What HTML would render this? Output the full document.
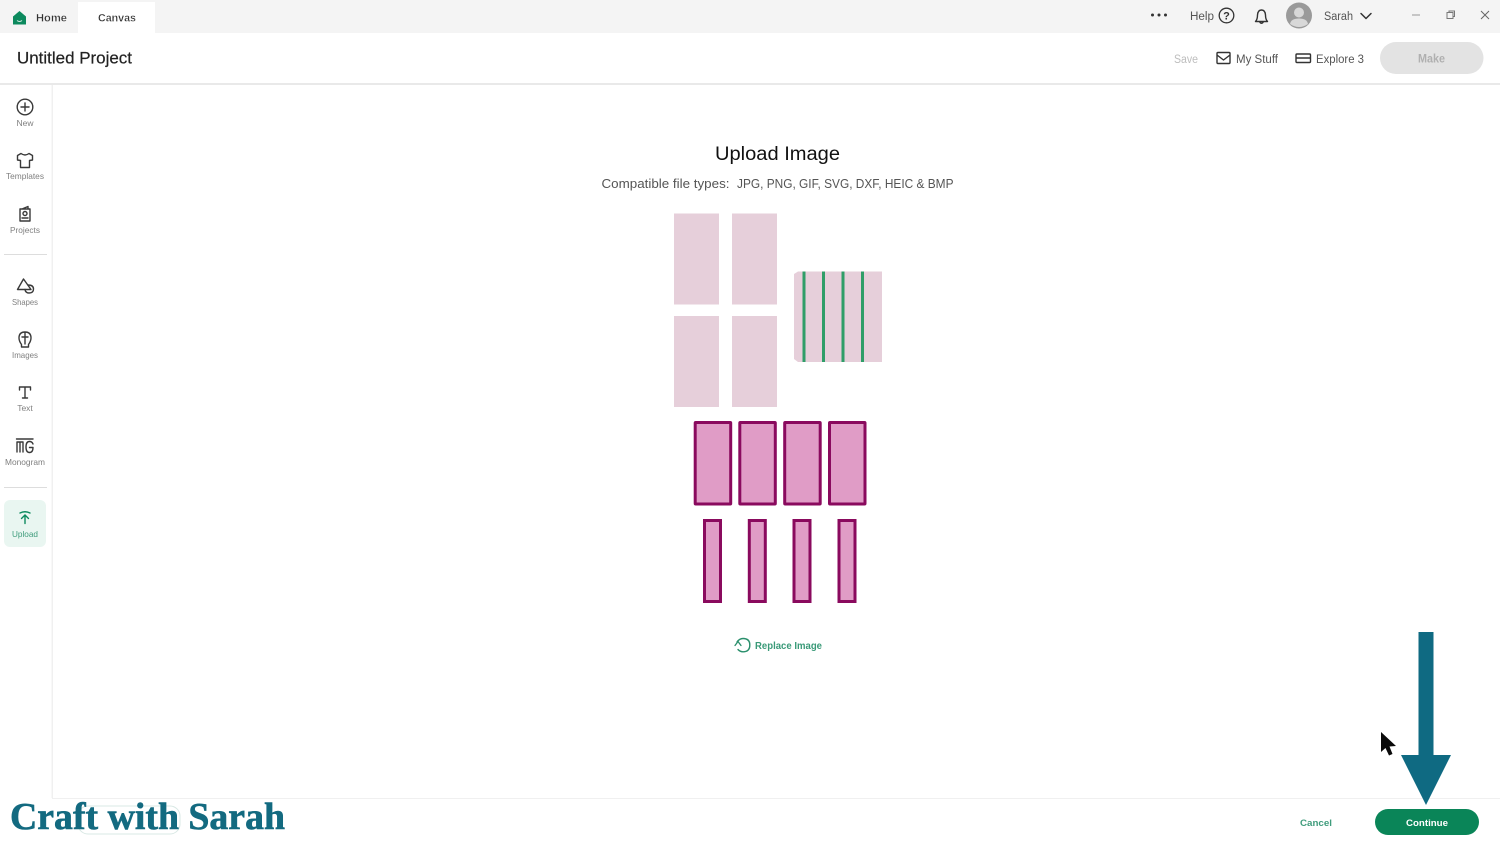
<!DOCTYPE html>
<html lang="en">
<head>
<meta charset="utf-8">
<title>Upload Image</title>
<style>
html,body{margin:0;padding:0;background:#fff;width:1500px;height:844px;overflow:hidden}
svg{display:block;font-family:"Liberation Sans",sans-serif;filter:blur(.35px)}
.ic{fill:none;stroke:#3a3a3a;stroke-width:1.4;stroke-linecap:round;stroke-linejoin:round}
.side{font-size:8.5px;fill:#808080}
.hd{font-size:11.5px;fill:#555}
.p{fill:#e6cfda}
.m{fill:#e09cc6;stroke:#8a0a5e;stroke-width:3}
</style>
</head>
<body>
<svg width="1500" height="844" viewBox="0 0 1500 844" xmlns="http://www.w3.org/2000/svg">
<rect width="1500" height="844" fill="#fff"/>

<!-- top bar -->
<rect width="1500" height="33" fill="#f4f4f4"/>
<rect x="78" y="2" width="77" height="32" fill="#fff"/>
<path d="M13 16.500L19.500 11L26 16.500V24.500H13Z" fill="#0c8a5e"/>
<path d="M17 20.500Q19.500 22.500 22 20.500" fill="none" stroke="#cfe9de" stroke-width="1"/>
<text x="36" y="21.500" font-size="11" fill="#333" font-weight="bold" stroke="#f4f4f4" stroke-width=".25" textLength="31" lengthAdjust="spacingAndGlyphs">Home</text>
<text x="98" y="21.500" font-size="11" fill="#333" font-weight="bold" stroke="#fff" stroke-width=".25" textLength="38" lengthAdjust="spacingAndGlyphs">Canvas</text>

<circle cx="1152.500" cy="15" r="1.500" fill="#333"/><circle cx="1159" cy="15" r="1.500" fill="#333"/><circle cx="1165.500" cy="15" r="1.500" fill="#333"/>
<text x="1190" y="20" class="hd" textLength="24" lengthAdjust="spacingAndGlyphs">Help</text>
<circle cx="1226.500" cy="15.500" r="7.300" fill="none" stroke="#333" stroke-width="1.300"/>
<text x="1226.500" y="19.500" font-size="11" font-weight="bold" fill="#333" text-anchor="middle">?</text>
<path class="ic" style="stroke:#333" d="M1255.500 21.500Q1257.500 19.500 1257.500 15Q1257.800 10 1261.500 10Q1265.200 10 1265.500 15Q1265.500 19.500 1267.500 21.500ZM1260 22.500Q1261.500 24 1263 22.500"/>
<circle cx="1299" cy="15.500" r="13" fill="#9a9a9a"/>
<circle cx="1299" cy="12.500" r="5" fill="#d8d8d8"/>
<path d="M1290 24Q1291 18.500 1299 18.500Q1307 18.500 1308 24Q1299 30 1290 24Z" fill="#d8d8d8"/>
<text x="1324" y="20" class="hd" textLength="29" lengthAdjust="spacingAndGlyphs">Sarah</text>
<path class="ic" style="stroke:#333;stroke-width:1.500" d="M1361 13.500L1366 18.500L1371 13.500"/>
<path d="M1412 15H1420" stroke="#999" stroke-width="1"/>
<path d="M1447 12.500H1453V18.500H1447Z M1449 12.500V11H1454.500V16.500H1453" fill="none" stroke="#777" stroke-width="1"/>
<path d="M1481 11L1489 19M1489 11L1481 19" stroke="#666" stroke-width="1"/>

<!-- header -->
<rect y="83" width="1500" height="2" fill="#e9e9e9"/>
<text x="17" y="63.500" font-size="16.500" fill="#222" stroke="#222" stroke-width=".2" textLength="115" lengthAdjust="spacingAndGlyphs">Untitled Project</text>
<text x="1174" y="63" font-size="11.500" fill="#bdbdbd" textLength="24" lengthAdjust="spacingAndGlyphs">Save</text>
<path class="ic" style="stroke:#333" d="M1217 53.500Q1217 52.500 1218 52.500H1229Q1230 52.500 1230 53.500V62.500Q1230 63.500 1229 63.500H1218Q1217 63.500 1217 62.500ZM1217 55L1223.500 60L1230 55"/>
<text x="1236" y="63" class="hd" textLength="42" lengthAdjust="spacingAndGlyphs">My Stuff</text>
<path class="ic" style="stroke:#333" d="M1297 54H1309.500Q1310.500 54 1310.500 55V61.500Q1310.500 62.500 1309.500 62.500H1297Q1296 62.500 1296 61.500V55Q1296 54 1297 54ZM1296 58H1310.500"/>
<text x="1316" y="63" class="hd" textLength="48" lengthAdjust="spacingAndGlyphs">Explore 3</text>
<rect x="1380" y="42" width="103.500" height="32" rx="16" fill="#e3e3e3"/>
<text x="1418" y="62.500" font-size="11.500" font-weight="bold" fill="#b0b0b0" textLength="27" lengthAdjust="spacingAndGlyphs">Make</text>

<!-- sidebar -->
<rect x="51.500" y="85" width="1.500" height="713" fill="#f0f0f0"/>
<circle cx="25" cy="107" r="7.800" class="ic"/>
<path class="ic" d="M25 103V111M21 107H29"/>
<text x="25" y="126" class="side" text-anchor="middle">New</text>
<path class="ic" d="M21 153.500L17.500 155.500V160L20.500 160.500V167.500H29.500V160.500L32.500 160V155.500L29 153.500Q25 156.500 21 153.500Z"/>
<text x="25" y="179" class="side" text-anchor="middle" textLength="38" lengthAdjust="spacingAndGlyphs">Templates</text>
<path class="ic" d="M20 209H30V221H20ZM22 209L28 206.500V209"/>
<circle cx="25" cy="213.500" r="2" class="ic"/>
<path class="ic" d="M22 218H28"/>
<text x="25" y="233" class="side" text-anchor="middle" textLength="30" lengthAdjust="spacingAndGlyphs">Projects</text>
<rect x="4" y="254" width="43" height="1" fill="#ddd"/>
<path class="ic" d="M23.500 279L31 289.500H17.500Z"/>
<path class="ic" d="M28 285Q33.500 285 33.500 289Q33.500 293 29 293Q25.500 293 25 289.500"/>
<text x="25" y="305" class="side" text-anchor="middle" textLength="26" lengthAdjust="spacingAndGlyphs">Shapes</text>
<path class="ic" d="M25 332Q31 332 31 338Q31 341 28.500 344.500V347H21.500V344.500Q19 341 19 338Q19 332 25 332ZM25 332V344M22 337H28"/>
<text x="25" y="358" class="side" text-anchor="middle" textLength="26" lengthAdjust="spacingAndGlyphs">Images</text>
<path class="ic" d="M19.500 390V387H30.500V390M25 387V398M22.500 398H27.500"/>
<text x="25" y="411" class="side" text-anchor="middle">Text</text>
<path class="ic" d="M16.500 439H33M17 442V452M20 442V452M23 442V452M17 442H23M33 444Q32 441.500 29.500 441.500Q26 441.500 26 447Q26 452.500 29.500 452.500Q33 452.500 33 447.500H29.500"/>
<text x="25" y="465" class="side" text-anchor="middle" textLength="40" lengthAdjust="spacingAndGlyphs">Monogram</text>
<rect x="4" y="487" width="43" height="1" fill="#ddd"/>
<rect x="4" y="500" width="42" height="47" rx="6" fill="#e9f6f1"/>
<path d="M20 513Q25 510.500 30 513M25 523.500V515M21.500 518.500L25 515L28.500 518.500" fill="none" stroke="#0c8a5e" stroke-width="1.400" stroke-linecap="round" stroke-linejoin="round"/>
<text x="25" y="537" class="side" style="fill:#3f9c7c" text-anchor="middle" textLength="26" lengthAdjust="spacingAndGlyphs">Upload</text>

<!-- title -->
<text x="715" y="160" font-size="19" fill="#111" textLength="125" lengthAdjust="spacingAndGlyphs">Upload Image</text>
<text x="601.500" y="188" font-size="12.500" fill="#555" textLength="128" lengthAdjust="spacingAndGlyphs">Compatible file types:</text>
<text x="737" y="188" font-size="12.500" fill="#555" textLength="216.500" lengthAdjust="spacingAndGlyphs">JPG, PNG, GIF, SVG, DXF, HEIC &amp; BMP</text>

<!-- pale pieces -->
<rect class="p" x="674" y="213.500" width="45" height="91"/>
<rect class="p" x="732" y="213.500" width="45" height="91"/>
<rect class="p" x="674" y="316" width="45" height="91"/>
<rect class="p" x="732" y="316" width="45" height="91"/>
<path class="p" d="M798 271.500H882V362H798L794 359V274Z"/>
<rect x="802.500" y="271.500" width="3" height="90.500" fill="#2f9e68"/>
<rect x="822" y="271.500" width="3" height="90.500" fill="#2f9e68"/>
<rect x="841.500" y="271.500" width="3" height="90.500" fill="#2f9e68"/>
<rect x="861" y="271.500" width="3" height="90.500" fill="#2f9e68"/>

<!-- magenta pieces -->
<rect class="m" x="695.200" y="422.500" width="35.500" height="81.500" rx=".5"/>
<rect class="m" x="739.800" y="422.500" width="35.500" height="81.500" rx=".5"/>
<rect class="m" x="784.700" y="422.500" width="35.500" height="81.500" rx=".5"/>
<rect class="m" x="829.500" y="422.500" width="35.500" height="81.500" rx=".5"/>
<rect class="m" x="704.500" y="520.500" width="16" height="81"/>
<rect class="m" x="749.300" y="520.500" width="16" height="81"/>
<rect class="m" x="794" y="520.500" width="16" height="81"/>
<rect class="m" x="839" y="520.500" width="16" height="81"/>

<!-- replace image -->
<path d="M737 642Q739.500 638.500 743 638.500Q749.800 638.500 749.800 645Q749.800 651.800 743 651.800Q740 651.800 738 649.500" fill="none" stroke="#2a8f6c" stroke-width="1.400" stroke-linecap="round"/>
<path d="M735 645.500L738 641.500L741 645.500" fill="none" stroke="#2a8f6c" stroke-width="1.300" stroke-linecap="round" stroke-linejoin="round"/>
<text x="755" y="649" font-size="10" font-weight="bold" fill="#3a9a78" textLength="67" lengthAdjust="spacingAndGlyphs">Replace Image</text>

<!-- footer -->
<rect x="52" y="798" width="1448" height="1" fill="#f0f0f0"/>
<text x="1300" y="826" font-size="9.500" font-weight="bold" fill="#3f9c7c" textLength="32" lengthAdjust="spacingAndGlyphs">Cancel</text>
<rect x="1375" y="809" width="104" height="26" rx="13" fill="#0a8558"/>
<text x="1406" y="826" font-size="9.500" font-weight="bold" fill="#fff" textLength="42" lengthAdjust="spacingAndGlyphs">Continue</text>

<!-- watermark -->
<rect x="78" y="806" width="102" height="28" rx="10" fill="#fff" stroke="#d8e8e4" stroke-width="1"/>
<text x="10" y="829" font-family="'Liberation Serif',serif" font-size="38" font-weight="bold" fill="#136a80" stroke="#136a80" stroke-width=".6" textLength="275" lengthAdjust="spacingAndGlyphs">Craft with Sarah</text>

<!-- arrow -->
<rect x="1418.500" y="632" width="15" height="124" fill="#0f6a82"/>
<path d="M1401 755H1451L1426 805Z" fill="#0f6a82"/>

<!-- cursor -->
<path d="M1381 732V752L1385.500 748L1389 755.500L1392.500 754L1389.500 746.500L1396 746Z" fill="#0a0a0a"/>
</svg>
</body>
</html>
